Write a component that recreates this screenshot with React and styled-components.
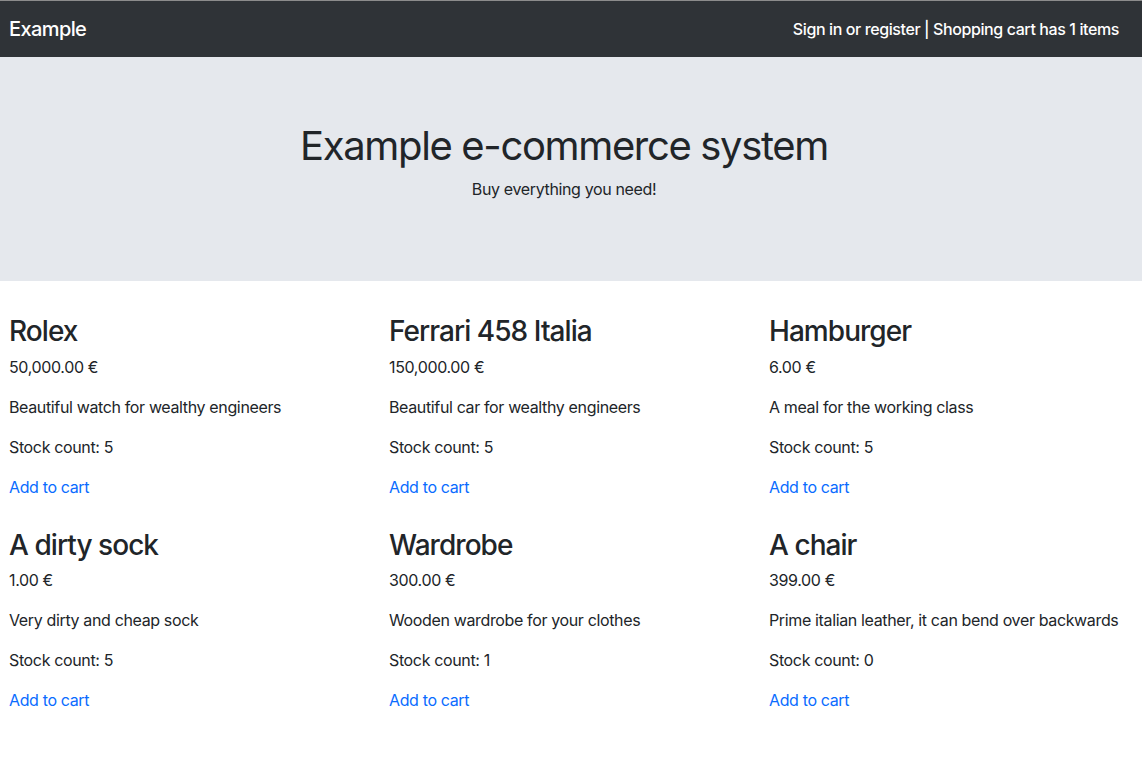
import React from "react"
import styled, { createGlobalStyle } from "styled-components"

const Global = createGlobalStyle`
  body {
    margin: 0;
    background: #fff;
    color: #212529;
    font-family: Inter, "Noto Sans", sans-serif;
    font-size: 16px;
    line-height: 1.5;
    letter-spacing: -0.36px;
    overflow-x: hidden;
  }
  * { box-sizing: border-box; }
`

const Navbar = styled.nav`
  display: flex;
  align-items: center;
  justify-content: space-between;
  height: 57px;
  padding: 0 23px 0 9px;
  background: #2f3337;
  border-top: 1px solid #8c8c8c;
  color: #fff;
`

const Brand = styled.a`
  font-size: 20px;
  font-weight: 500;
  line-height: 30px;
  color: #fff;
  text-decoration: none;
  letter-spacing: -0.6px;
`

const NavText = styled.span`
  font-size: 16px;
  font-weight: 500;
  color: #fff;
  letter-spacing: -0.4px;
`

const Jumbotron = styled.header`
  background: #e5e8ed;
  height: 224px;
  padding: 65px 14px 0 0;
  margin-bottom: 32px;
  text-align: center;
`

const Title = styled.h1`
  margin: 0 0 7px;
  font-size: 40px;
  font-weight: 400;
  line-height: 1.2;
  letter-spacing: -1.35px;
`

const Lead = styled.p`
  margin: 0;
  font-size: 16px;
`

const Grid = styled.main`
  display: grid;
  grid-template-columns: 380px 380px 1fr;
  padding-left: 9px;
`

const Card = styled.section`
  padding-bottom: 12px;
`

const Name = styled.h3`
  margin: 0 0 4px;
  font-size: 28px;
  font-weight: 500;
  line-height: 37.6px;
  letter-spacing: -0.95px;
`

const Line = styled.p`
  margin: 0 0 16px;
`

const CartLink = styled.a`
  color: #0a6cff;
  text-decoration: none;
  cursor: pointer;
`

const products = [
  { name: "Rolex", price: "50,000.00 €", desc: "Beautiful watch for wealthy engineers", stock: 5 },
  { name: "Ferrari 458 Italia", price: "150,000.00 €", desc: "Beautiful car for wealthy engineers", stock: 5 },
  { name: "Hamburger", price: "6.00 €", desc: "A meal for the working class", stock: 5 },
  { name: "A dirty sock", price: "1.00 €", desc: "Very dirty and cheap sock", stock: 5 },
  { name: "Wardrobe", price: "300.00 €", desc: "Wooden wardrobe for your clothes", stock: 1 },
  { name: "A chair", price: "399.00 €", desc: "Prime italian leather, it can bend over backwards", stock: 0 },
]

export default function App() {
  return (
    <>
      <Global />
      <Navbar>
        <Brand href="#">Example</Brand>
        <NavText>Sign in or register | Shopping cart has 1 items</NavText>
      </Navbar>
      <Jumbotron>
        <Title>Example e-commerce system</Title>
        <Lead>Buy everything you need!</Lead>
      </Jumbotron>
      <Grid>
        {products.map((p) => (
          <Card key={p.name}>
            <Name>{p.name}</Name>
            <Line>{p.price}</Line>
            <Line>{p.desc}</Line>
            <Line>Stock count: {p.stock}</Line>
            <Line>
              <CartLink>Add to cart</CartLink>
            </Line>
          </Card>
        ))}
      </Grid>
    </>
  )
}
